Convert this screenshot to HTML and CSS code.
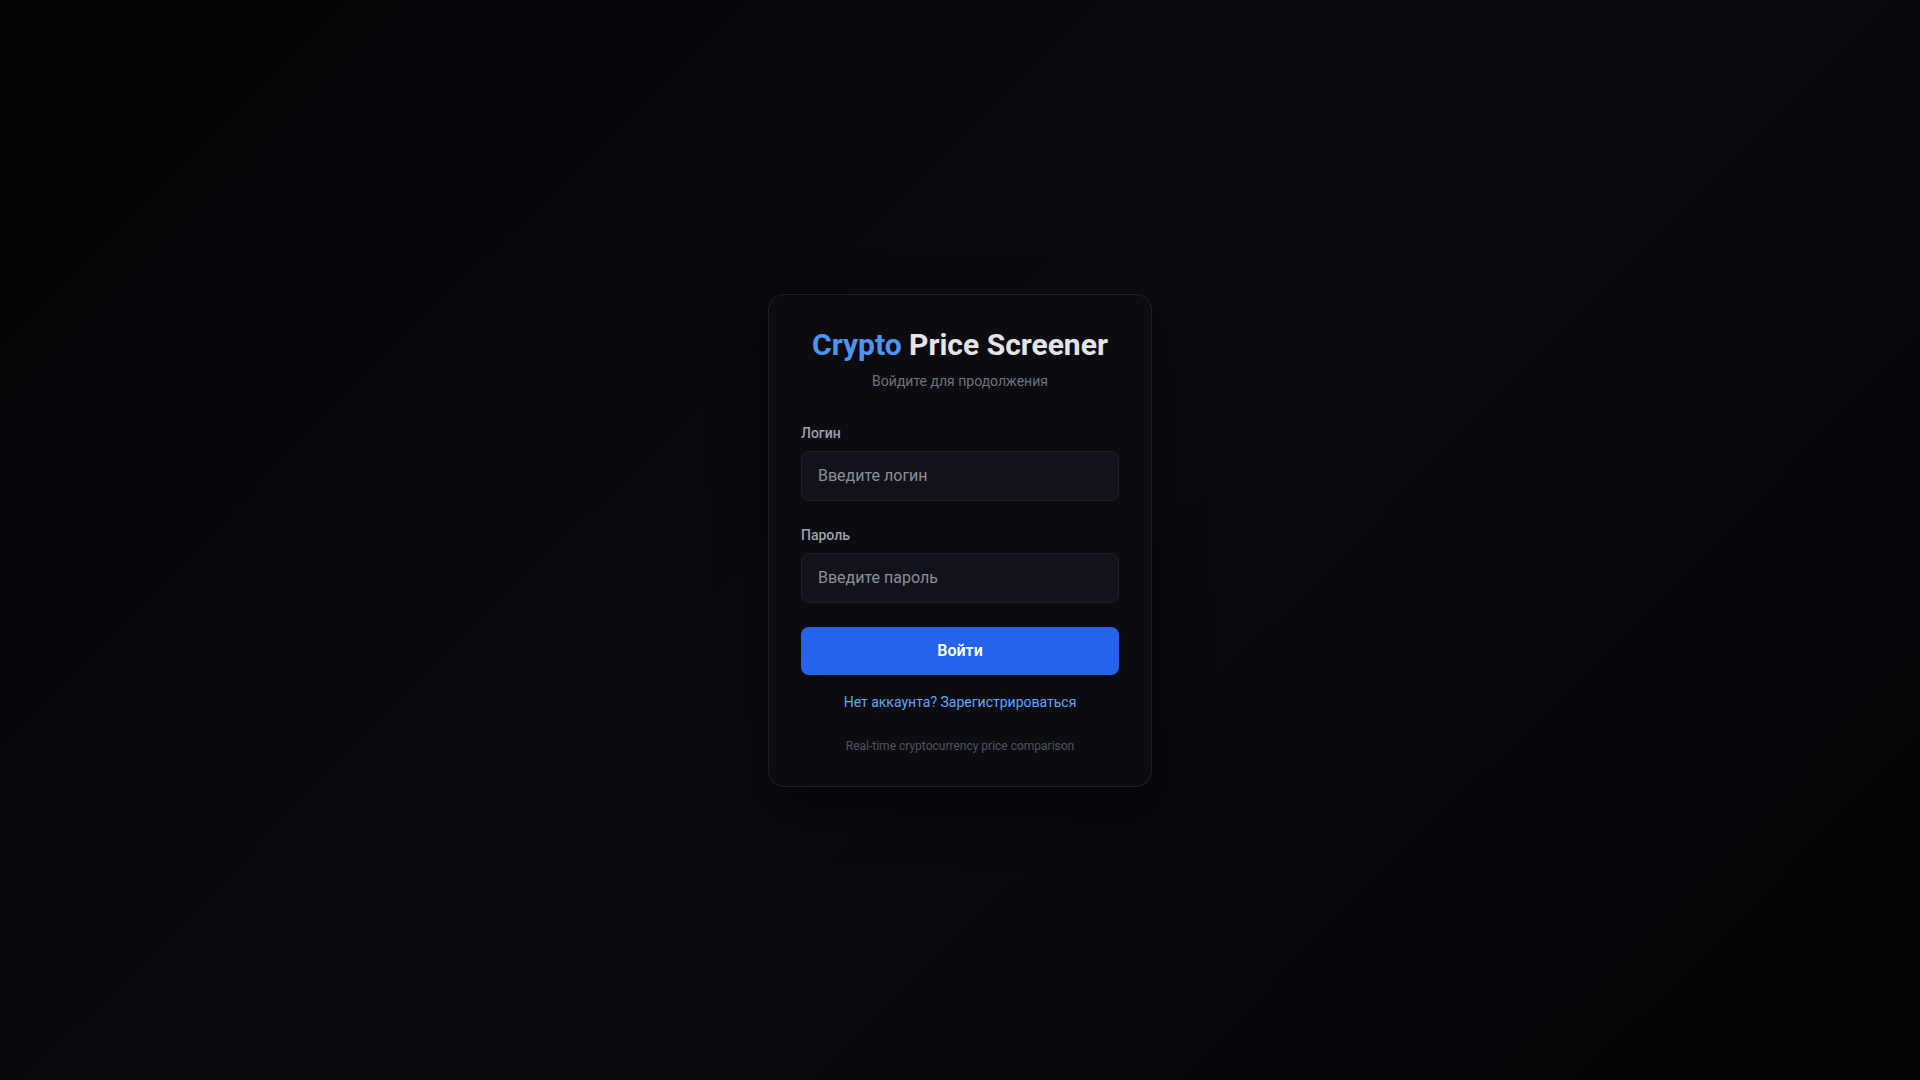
FILE: index.html
```html
<!DOCTYPE html>
<html lang="ru">
<head>
    <meta charset="UTF-8">
    <meta name="viewport" content="width=device-width, initial-scale=1.0">
    <title>Crypto Price Screener — Вход</title>
    <link rel="stylesheet" href="styles.css">
</head>
<body>
    <main class="login-page">
        <div class="login-card">
            <header class="login-header">
                <h1 class="login-title"><span class="accent">Crypto</span> Price Screener</h1>
                <p class="login-subtitle">Войдите для продолжения</p>
            </header>

            <form class="login-form" onsubmit="return false">
                <div class="form-group">
                    <label class="form-label" for="login">Логин</label>
                    <input class="form-input" id="login" type="text" placeholder="Введите логин">
                </div>
                <div class="form-group">
                    <label class="form-label" for="password">Пароль</label>
                    <input class="form-input" id="password" type="password" placeholder="Введите пароль">
                </div>
                <button class="login-button" type="submit">Войти</button>
            </form>

            <p class="login-register"><a href="#">Нет аккаунта? Зарегистрироваться</a></p>
            <p class="login-footer">Real-time cryptocurrency price comparison</p>
        </div>
    </main>
</body>
</html>
```

FILE: styles.css
```css
* {
    box-sizing: border-box;
}

body {
    margin: 0;
    font-family: Roboto, "Liberation Sans", sans-serif;
    background: linear-gradient(135deg, #040406 0%, #0b0c11 50%, #040406 100%);
    color: #e5e7eb;
    min-height: 100vh;
}

.login-page {
    min-height: 100vh;
    display: flex;
    align-items: center;
    justify-content: center;
}

.login-card {
    width: 384px;
    padding: 32px;
    background-color: #0c0c10;
    border: 1px solid #1f2027;
    border-radius: 16px;
    box-shadow: 0 20px 50px rgba(0, 0, 0, 0.5);
}

.login-header {
    text-align: center;
    margin-bottom: 32px;
}

.login-title {
    margin: 0;
    font-size: 30px;
    line-height: 36px;
    font-weight: 700;
    color: #e5e5e7;
}

.login-title .accent {
    color: #4f95f0;
}

.login-subtitle {
    margin: 8px 0 0;
    font-size: 14px;
    line-height: 20px;
    color: #6b7280;
}

.form-group {
    margin-bottom: 24px;
}

.form-label {
    display: block;
    margin-bottom: 8px;
    font-size: 14px;
    line-height: 20px;
    font-weight: 500;
    color: #9ca3af;
}

.form-input {
    display: block;
    width: 100%;
    padding: 12px 16px;
    font-family: inherit;
    font-size: 16px;
    line-height: 24px;
    color: #e5e7eb;
    background-color: #12131a;
    border: 1px solid #1e2028;
    border-radius: 8px;
    outline: none;
}

.form-input::placeholder {
    color: #8b8e97;
}

.login-button {
    display: block;
    width: 100%;
    padding: 12px 16px;
    font-family: inherit;
    font-size: 16px;
    line-height: 24px;
    font-weight: 600;
    color: #ffffff;
    background-color: #2563eb;
    border: none;
    border-radius: 8px;
    cursor: pointer;
}

.login-register {
    margin: 17px 0 0;
    text-align: center;
    font-size: 14px;
    line-height: 20px;
}

.login-register a {
    color: #60a5fa;
    text-decoration: none;
}

.login-footer {
    margin: 26px 0 0;
    text-align: center;
    font-size: 12px;
    line-height: 16px;
    color: #4b5563;
}
```
